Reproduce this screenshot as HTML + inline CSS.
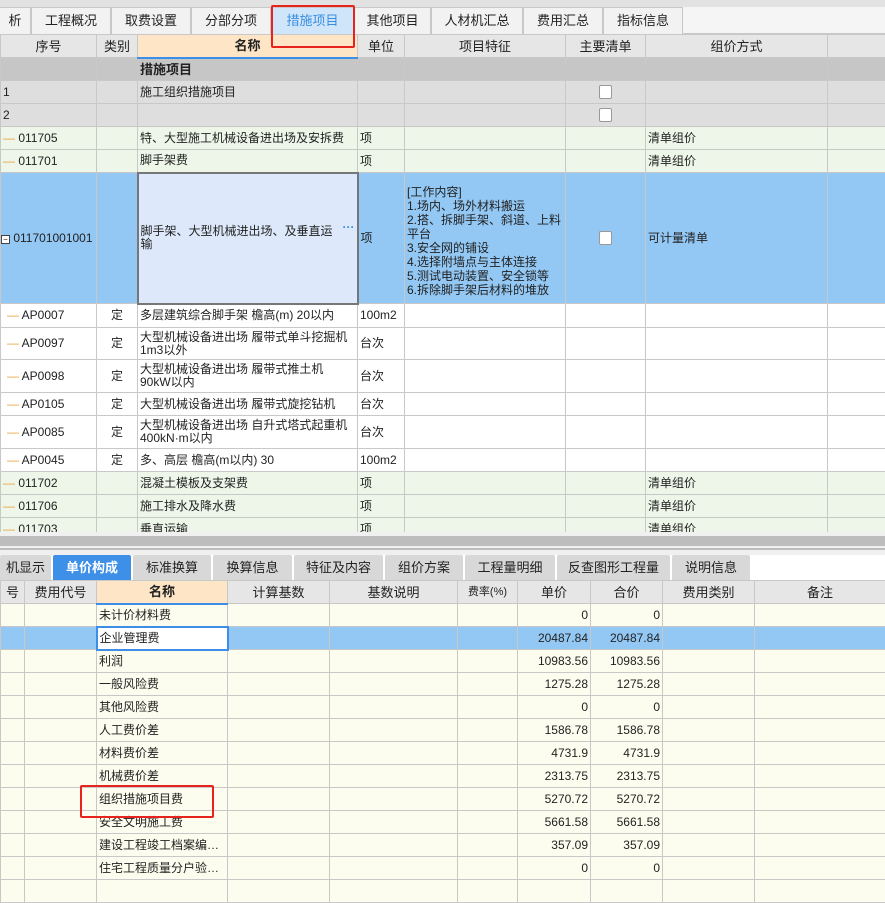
<!DOCTYPE html>
<html><head><meta charset="utf-8"><style>
*{margin:0;padding:0;box-sizing:border-box}
body{width:885px;height:884px;overflow:hidden;background:#fff;font:12px "Liberation Sans","Noto Sans CJK SC",sans-serif;color:#222;position:relative}
.abs{position:absolute}
table{border-collapse:collapse;table-layout:fixed;position:absolute;left:0}
td{border:1px solid #c8c8c8;padding:0 2px;white-space:nowrap;overflow:hidden;line-height:13px}
.tab{position:absolute;top:7px;height:27px;border:1px solid #c8c8c8;border-bottom:none;background:#f2f2f2;text-align:center;line-height:25px;font-size:13px}
.btab{position:absolute;top:555px;height:25px;background:#d8d8d8;text-align:center;line-height:25px;font-size:13px;border-radius:2px 2px 0 0}
.h td{background:#e6e6e6;text-align:center;font-size:13px}
.h td.n{background:#fde5c6;font-weight:bold;border-bottom:2px solid #3c8ee6}
.g td{background:#edf6e8}
.r{text-align:right}
.c{text-align:center}
.cb{display:inline-block;width:13px;height:14px;background:#fff;border:1px solid #999;border-radius:2px;vertical-align:middle}
.y td{background:#fdfdef}
.s td{background:#93c8f4}
.w{white-space:normal}
.tl{color:#e8a33c}
.red{z-index:5}
</style></head><body>
<div class="abs" style="left:0;top:0;width:885px;height:7px;background:#e2e2e2"></div>
<div class="abs" style="left:0;top:7px;width:885px;height:27px;background:#f5f5f5;border-bottom:1px solid #c8c8c8"></div>
<div class="tab" style="left:-1px;width:32px">析</div>
<div class="tab" style="left:31px;width:80px">工程概况</div>
<div class="tab" style="left:111px;width:80px">取费设置</div>
<div class="tab" style="left:191px;width:80px">分部分项</div>
<div class="tab" style="left:271px;width:83px;background:#cfe5fa;color:#3a8ee0">措施项目</div>
<div class="tab" style="left:354px;width:77px">其他项目</div>
<div class="tab" style="left:431px;width:92px">人材机汇总</div>
<div class="tab" style="left:523px;width:80px">费用汇总</div>
<div class="tab" style="left:603px;width:80px">指标信息</div>

<table style="top:34px;width:885px">
<colgroup><col style="width:96px"><col style="width:41px"><col style="width:220px"><col style="width:47px"><col style="width:161px"><col style="width:80px"><col style="width:182px"><col style="width:58px"></colgroup>
<tr class="h" style="height:23px"><td>序号</td><td>类别</td><td class="n">名称</td><td>单位</td><td>项目特征</td><td>主要清单</td><td>组价方式</td><td></td></tr>
<tr style="height:23px;background:#c6c6c6"><td></td><td></td><td style="font-weight:bold;font-size:13px">措施项目</td><td></td><td></td><td></td><td></td><td></td></tr>
<tr style="height:23px;background:#dedede"><td>1</td><td></td><td>施工组织措施项目</td><td></td><td></td><td class="c"><span class="cb"></span></td><td></td><td></td></tr>
<tr style="height:23px;background:#dedede"><td>2</td><td></td><td></td><td></td><td></td><td class="c"><span class="cb"></span></td><td></td><td></td></tr>
<tr class="g" style="height:23px"><td><span class="tl">—</span> 011705</td><td></td><td>特、大型施工机械设备进出场及安拆费</td><td>项</td><td></td><td></td><td>清单组价</td><td></td></tr>
<tr class="g" style="height:23px"><td><span class="tl">—</span> 011701</td><td></td><td>脚手架费</td><td>项</td><td></td><td></td><td>清单组价</td><td></td></tr>
<tr class="s" style="height:131px"><td style="padding-left:0"><span style="display:inline-block;width:9px;height:9px;border:1px solid #444;background:#fff;font-size:8px;line-height:7px;text-align:center">−</span> 011701001001</td><td></td><td class="w" style="background:#dde9fb;border:2px solid #777">脚手架、大型机械进出场、及垂直运<span style="float:right;color:#3a8ee0;font-weight:bold;margin-top:-4px">···</span><br>输</td><td>项</td><td class="w" style="font-size:12px;line-height:14px;padding-top:6px">[工作内容]<br>1.场内、场外材料搬运<br>2.搭、拆脚手架、斜道、上料平台<br>3.安全网的铺设<br>4.选择附墙点与主体连接<br>5.测试电动装置、安全锁等<br>6.拆除脚手架后材料的堆放</td><td class="c"><span class="cb"></span></td><td>可计量清单</td><td></td></tr>
<tr style="height:24px"><td style="padding-left:6px"><span class="tl">—</span> AP0007</td><td class="c">定</td><td>多层建筑综合脚手架 檐高(m) 20以内</td><td>100m2</td><td></td><td></td><td></td><td></td></tr>
<tr style="height:32px"><td style="padding-left:6px"><span class="tl">—</span> AP0097</td><td class="c">定</td><td class="w">大型机械设备进出场 履带式单斗挖掘机 1m3以外</td><td>台次</td><td></td><td></td><td></td><td></td></tr>
<tr style="height:33px"><td style="padding-left:6px"><span class="tl">—</span> AP0098</td><td class="c">定</td><td class="w">大型机械设备进出场 履带式推土机 90kW以内</td><td>台次</td><td></td><td></td><td></td><td></td></tr>
<tr style="height:23px"><td style="padding-left:6px"><span class="tl">—</span> AP0105</td><td class="c">定</td><td>大型机械设备进出场 履带式旋挖钻机</td><td>台次</td><td></td><td></td><td></td><td></td></tr>
<tr style="height:33px"><td style="padding-left:6px"><span class="tl">—</span> AP0085</td><td class="c">定</td><td class="w">大型机械设备进出场 自升式塔式起重机 400kN·m以内</td><td>台次</td><td></td><td></td><td></td><td></td></tr>
<tr style="height:23px"><td style="padding-left:6px"><span class="tl">—</span> AP0045</td><td class="c">定</td><td>多、高层 檐高(m以内) 30</td><td>100m2</td><td></td><td></td><td></td><td></td></tr>
<tr class="g" style="height:23px"><td><span class="tl">—</span> 011702</td><td></td><td>混凝土模板及支架费</td><td>项</td><td></td><td></td><td>清单组价</td><td></td></tr>
<tr class="g" style="height:23px"><td><span class="tl">—</span> 011706</td><td></td><td>施工排水及降水费</td><td>项</td><td></td><td></td><td>清单组价</td><td></td></tr>
<tr class="g" style="height:23px"><td><span class="tl">—</span> 011703</td><td></td><td>垂直运输</td><td>项</td><td></td><td></td><td>清单组价</td><td></td></tr>
</table>
<div class="abs red" style="left:271px;top:5px;width:84px;height:43px;border:2px solid #e8231e;border-radius:2px"></div>
<div class="abs" style="left:0;top:532px;width:885px;height:23px;background:#f0f0f0"></div>
<div class="abs" style="left:0;top:536px;width:885px;height:10px;background:#bdbdbd"></div>
<div class="abs" style="left:0;top:548px;width:885px;height:2px;background:#bdbdbd"></div>
<div class="btab" style="left:0;width:51px">机显示</div>
<div class="btab" style="left:53px;width:78px;background:#3d8fe8;color:#fff;font-weight:bold">单价构成</div>
<div class="btab" style="left:133px;width:78px">标准换算</div>
<div class="btab" style="left:213px;width:79px">换算信息</div>
<div class="btab" style="left:294px;width:89px">特征及内容</div>
<div class="btab" style="left:385px;width:78px">组价方案</div>
<div class="btab" style="left:465px;width:90px">工程量明细</div>
<div class="btab" style="left:557px;width:113px">反查图形工程量</div>
<div class="btab" style="left:672px;width:78px">说明信息</div>
<table style="top:580px;width:885px">
<colgroup><col style="width:24px"><col style="width:72px"><col style="width:131px"><col style="width:102px"><col style="width:128px"><col style="width:60px"><col style="width:73px"><col style="width:72px"><col style="width:92px"><col style="width:131px"></colgroup>
<tr class="h" style="height:23px"><td>号</td><td>费用代号</td><td class="n">名称</td><td>计算基数</td><td>基数说明</td><td style="font-size:11px">费率(%)</td><td>单价</td><td>合价</td><td>费用类别</td><td>备注</td></tr>
<tr class="y" style="height:23px"><td></td><td></td><td>未计价材料费</td><td></td><td></td><td></td><td class="r">0</td><td class="r">0</td><td></td><td></td></tr>
<tr class="s" style="height:23px"><td></td><td></td><td style="background:#fff;border:2px solid #3c8ee6">企业管理费</td><td></td><td></td><td></td><td class="r">20487.84</td><td class="r">20487.84</td><td></td><td></td></tr>
<tr class="y" style="height:23px"><td></td><td></td><td>利润</td><td></td><td></td><td></td><td class="r">10983.56</td><td class="r">10983.56</td><td></td><td></td></tr>
<tr class="y" style="height:23px"><td></td><td></td><td>一般风险费</td><td></td><td></td><td></td><td class="r">1275.28</td><td class="r">1275.28</td><td></td><td></td></tr>
<tr class="y" style="height:23px"><td></td><td></td><td>其他风险费</td><td></td><td></td><td></td><td class="r">0</td><td class="r">0</td><td></td><td></td></tr>
<tr class="y" style="height:23px"><td></td><td></td><td>人工费价差</td><td></td><td></td><td></td><td class="r">1586.78</td><td class="r">1586.78</td><td></td><td></td></tr>
<tr class="y" style="height:23px"><td></td><td></td><td>材料费价差</td><td></td><td></td><td></td><td class="r">4731.9</td><td class="r">4731.9</td><td></td><td></td></tr>
<tr class="y" style="height:23px"><td></td><td></td><td>机械费价差</td><td></td><td></td><td></td><td class="r">2313.75</td><td class="r">2313.75</td><td></td><td></td></tr>
<tr class="y" style="height:23px"><td></td><td></td><td>组织措施项目费</td><td></td><td></td><td></td><td class="r">5270.72</td><td class="r">5270.72</td><td></td><td></td></tr>
<tr class="y" style="height:23px"><td></td><td></td><td>安全文明施工费</td><td></td><td></td><td></td><td class="r">5661.58</td><td class="r">5661.58</td><td></td><td></td></tr>
<tr class="y" style="height:23px"><td></td><td></td><td>建设工程竣工档案编…</td><td></td><td></td><td></td><td class="r">357.09</td><td class="r">357.09</td><td></td><td></td></tr>
<tr class="y" style="height:23px"><td></td><td></td><td>住宅工程质量分户验…</td><td></td><td></td><td></td><td class="r">0</td><td class="r">0</td><td></td><td></td></tr>
<tr class="y" style="height:23px"><td></td><td></td><td></td><td></td><td></td><td></td><td></td><td></td><td></td><td></td></tr>
</table>
<div class="abs red" style="left:80px;top:785px;width:134px;height:33px;border:2px solid #e8231e;border-radius:2px"></div>
</body></html>
